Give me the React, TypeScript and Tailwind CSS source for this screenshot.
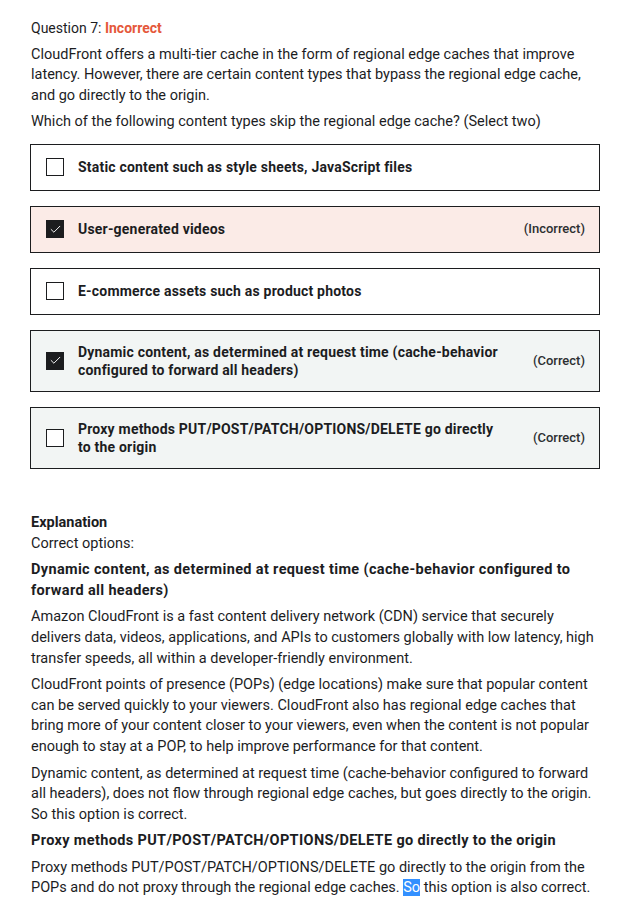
import { Check } from "lucide-react";

type Option = {
  text: string;
  checked?: boolean;
  status?: "correct" | "incorrect";
};

const options: Option[] = [
  { text: "Static content such as style sheets, JavaScript files" },
  { text: "User-generated videos", checked: true, status: "incorrect" },
  { text: "E-commerce assets such as product photos" },
  {
    text: "Dynamic content, as determined at request time (cache-behavior configured to forward all headers)",
    checked: true,
    status: "correct",
  },
  {
    text: "Proxy methods PUT/POST/PATCH/OPTIONS/DELETE go directly to the origin",
    status: "correct",
  },
];

function OptionRow({ opt }: { opt: Option }) {
  const bg =
    opt.status === "incorrect"
      ? "bg-[#fbebe7]"
      : opt.status === "correct"
        ? "bg-[#f2f5f4]"
        : "bg-white";
  return (
    <div
      className={`flex min-h-[47px] items-center gap-[14px] border border-[#1c1d1f] py-[12px] pl-[15px] pr-[14px] ${bg}`}
    >
      <div
        className={`flex h-[18px] w-[18px] shrink-0 items-center justify-center border border-[#1c1d1f] ${
          opt.checked ? "bg-[#1c1d1f]" : "bg-white"
        }`}
      >
        {opt.checked && <Check className="h-[13px] w-[13px] text-white" strokeWidth={1.75} />}
      </div>
      <div className="flex-1 font-bold text-[14px] leading-[18px] tracking-[0.2px]">
        {opt.text}
      </div>
      {opt.status && (
        <div className="shrink-0 pl-3 text-[13px] font-medium text-[#2d2f31]">
          {opt.status === "correct" ? "(Correct)" : "(Incorrect)"}
        </div>
      )}
    </div>
  );
}

export default function App() {
  return (
    <div className="min-h-screen bg-white pl-[31px] pr-[20px] pt-[18px] text-[#1c1d1f] font-['Roboto',sans-serif] text-[14.5px] leading-[20.6px]">
      <div className="text-[14px]">
        Question 7: <span className="font-bold text-[#e5583b]">Incorrect</span>
      </div>
      <p className="mt-[6px]">
        CloudFront offers a multi-tier cache in the form of regional edge caches that improve
        latency. However, there are certain content types that bypass the regional edge cache,
        and go directly to the origin.
      </p>
      <p className="mt-[6px]">
        Which of the following content types skip the regional edge cache? (Select two)
      </p>

      <div className="-ml-px -mr-[2px] mt-[11px] flex flex-col gap-[15px]">
        {options.map((o) => (
          <OptionRow key={o.text} opt={o} />
        ))}
      </div>

      <div className="mt-[44px] font-bold">Explanation</div>
      <div>Correct options:</div>
      <p className="mt-[6px] font-bold tracking-[0.35px]">
        Dynamic content, as determined at request time (cache-behavior configured to forward all
        headers)
      </p>
      <p className="mt-[6px]">
        Amazon CloudFront is a fast content delivery network (CDN) service that securely delivers
        data, videos, applications, and APIs to customers globally with low latency, high transfer
        speeds, all within a developer-friendly environment.
      </p>
      <p className="mt-[6px]">
        CloudFront points of presence (POPs) (edge locations) make sure that popular content can be
        served quickly to your viewers. CloudFront also has regional edge caches that bring more of
        your content closer to your viewers, even when the content is not popular enough to stay at
        a POP, to help improve performance for that content.
      </p>
      <p className="mt-[6px]">
        Dynamic content, as determined at request time (cache-behavior configured to forward all
        headers), does not flow through regional edge caches, but goes directly to the origin. So
        this option is correct.
      </p>
      <p className="mt-[6px] font-bold tracking-[0.35px]">
        Proxy methods PUT/POST/PATCH/OPTIONS/DELETE go directly to the origin
      </p>
      <p className="mt-[6px]">
        Proxy methods PUT/POST/PATCH/OPTIONS/DELETE go directly to the origin from the POPs and do
        not proxy through the regional edge caches.{" "}
        <span className="bg-[#3390ff] text-white">So</span> this option is also correct.
      </p>
    </div>
  );
}
